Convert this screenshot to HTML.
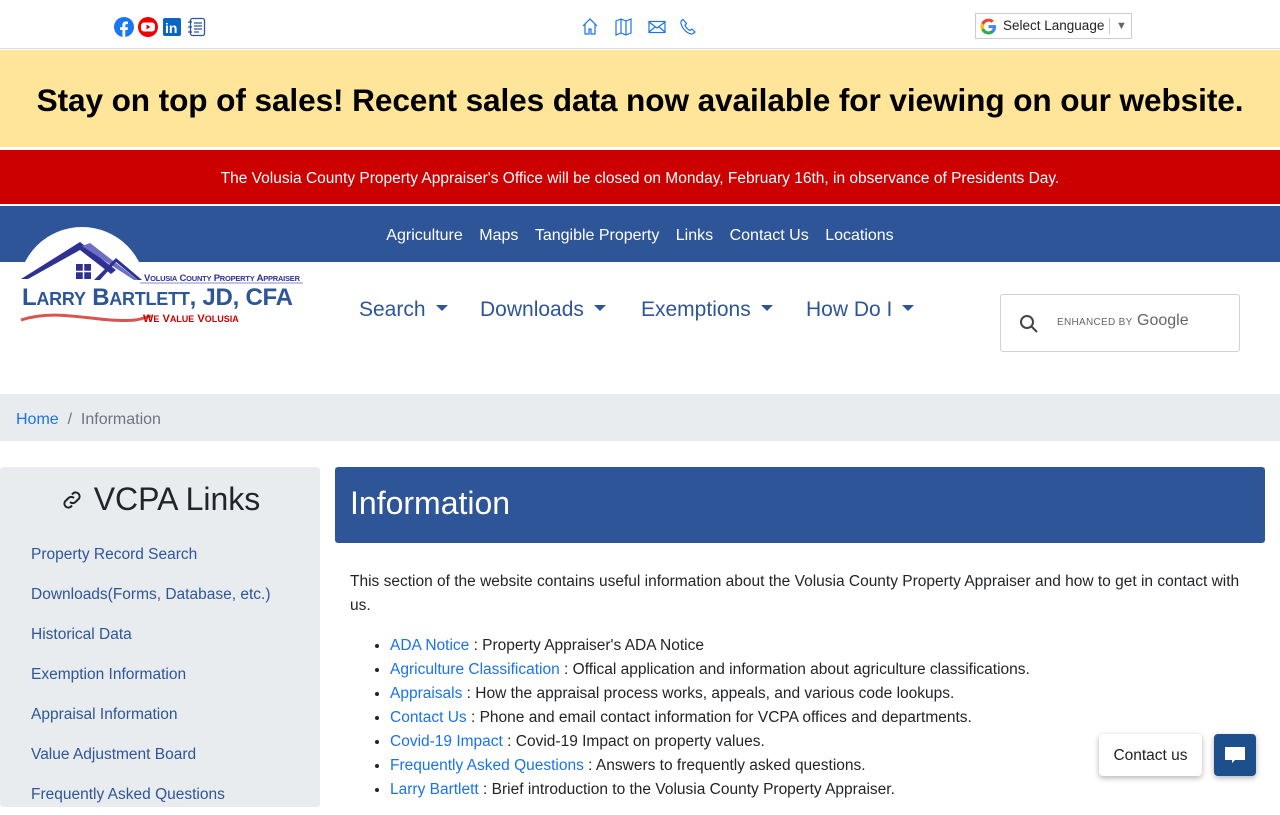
<!DOCTYPE html>
<html><head><meta charset="utf-8"><style>
*{box-sizing:border-box;margin:0;padding:0}
body{width:1280px;height:800px;overflow:hidden;position:relative;font-family:"Liberation Sans",sans-serif;background:#fff;color:#212529}
.abs{position:absolute}
a{text-decoration:none}
.top{left:0;top:0;width:1280px;height:49px;border-bottom:1px solid #ddd}
.yellow{left:0;top:50px;width:1280px;height:97px;background:#fee59a;text-align:center;font-weight:bold;font-size:31.6px;line-height:101px;color:#000;letter-spacing:-0.1px}
.red{left:0;top:150px;width:1280px;height:54px;background:#cc0000;color:#fff;text-align:center;font-size:15.5px;line-height:58px}
.blue{left:0;top:206px;width:1280px;height:56px;background:#2e5597}
.nav1{left:0;top:208px;width:1280px;text-align:center;line-height:56px;font-size:16px;color:#fff}
.nav1 span{margin:0 6px}
.nav2{top:298px;font-size:21px;color:#2e5597}
.car{display:inline-block;width:0;height:0;border-left:6px solid transparent;border-right:6px solid transparent;border-top:6px solid #2e5597;vertical-align:middle;margin-left:10px;margin-top:-4px}
.sbox{left:1000px;top:294px;width:240px;height:58px;border:1px solid #d0d0d0;border-radius:3px}
.crumb{left:0;top:394px;width:1280px;height:47px;background:#e9ecef;font-size:16px;line-height:51px;padding-left:16px;color:#6c757d}
.side{left:0;top:467px;width:320px;height:340px;background:#e9ecef;border-radius:3px}
.side h2{font-size:32px;font-weight:500;color:#212529;text-align:center;margin-top:14px;height:54px}
.side a{display:block;color:#2e5597;font-size:15.5px;padding-left:31px;height:40px;line-height:40px}
.mh{left:335px;top:467px;width:930px;height:76px;background:#2e5597;border-radius:3px;color:#fff;font-size:32px;line-height:72px;padding-left:15px;font-weight:500}
.content{left:350px;top:570px;width:890px;font-size:15.5px;line-height:24px}
.content ul{margin-top:16px;padding-left:40px}
.content a{color:#1a73e8}
</style></head><body>
<div class="abs top"></div>
<svg class="abs" style="left:114px;top:17px" width="94" height="20" viewBox="0 0 94 20">
<circle cx="10" cy="10" r="10" fill="#1877f2"/><path d="M11.3 20v-7h2.3l.4-2.8h-2.7V8.5c0-.8.3-1.4 1.4-1.4H14V4.6c-.3 0-1.1-.1-2.1-.1-2.1 0-3.5 1.3-3.5 3.6v2.1H6v2.8h2.4v7z" fill="#fff"/>
<circle cx="34" cy="10" r="10" fill="#e00"/><rect x="27" y="5.5" width="14" height="9" rx="3" fill="#fff"/><path d="M32.5 7.5v5l4-2.5z" fill="#e00"/>
<rect x="49" y="1" width="18" height="18" rx="2" fill="#0a66c2"/><text x="51" y="16" font-family="Liberation Sans" font-weight="bold" font-size="14" fill="#fff">in</text>
<rect x="76.5" y="1.5" width="14" height="17" rx="2" fill="none" stroke="#2e5597" stroke-width="1.3"/><path d="M80 6h8M80 9h8M80 12h8M80 15h5M74 5h4M74 10h4M74 15h4" stroke="#2e5597" stroke-width="1.2"/>
</svg>
<svg class="abs" style="left:582px;top:18px" width="118" height="18" viewBox="0 0 118 18" fill="none" stroke="#1a73e8" stroke-width="1.2">
<path d="M1 8L8 1l7 7M3 6v10h4v-5h2v5h4V6"/>
<path d="M34 3l5-2 5 2 5-2v14l-5 2-5-2-5 2zM39 1v14M44 3v14"/>
<rect x="67" y="3.5" width="16" height="11"/><path d="M67 4l8 6 8-6M67 14l6-5M83 14l-6-5"/>
<path d="M101 1.5c-1.5.8-2.5 2-2 4 1.5 5 5 9 10 10.5 2 .5 3-1 4-2l-3-3-2 1.5c-2-1-4-3-5-5l1.5-2z"/>
</svg>
<div class="abs" style="left:975px;top:13px;width:157px;height:26px;border:1px solid #ccc;font-size:13.5px;line-height:24px;padding-left:27px;color:#222">Select Language<span style="position:absolute;left:133px;top:4px;height:16px;border-left:1px solid #ccc"></span><span style="position:absolute;left:140px;top:0;color:#666;font-size:11px">▼</span>
<svg style="position:absolute;left:4px;top:4px" width="17" height="17" viewBox="0 0 18 18"><path d="M17 9.2c0-.6 0-1.1-.1-1.6H9v3.1h4.5a4 4 0 0 1-1.7 2.6v2.1h2.7c1.6-1.5 2.5-3.6 2.5-6.2z" fill="#4285f4"/><path d="M9 17.5c2.3 0 4.2-.8 5.5-2.1l-2.7-2.1c-.7.5-1.7.8-2.8.8-2.2 0-4-1.5-4.7-3.4H1.5v2.2A8.5 8.5 0 0 0 9 17.5z" fill="#34a853"/><path d="M4.3 10.7a5 5 0 0 1 0-3.3V5.2H1.5a8.5 8.5 0 0 0 0 7.6z" fill="#fbbc05"/><path d="M9 3.9c1.2 0 2.4.4 3.3 1.3l2.4-2.4A8.5 8.5 0 0 0 1.5 5.2l2.8 2.2C5 5.4 6.8 3.9 9 3.9z" fill="#ea4335"/></svg></div>

<div class="abs yellow">Stay on top of sales! Recent sales data now available for viewing on our website.</div>
<div class="abs red">The Volusia County Property Appraiser's Office will be closed on Monday, February 16th, in observance of Presidents Day.</div>
<div class="abs blue"></div>
<div class="abs nav1"><span>Agriculture</span> <span>Maps</span> <span>Tangible Property</span> <span>Links</span> <span>Contact Us</span> <span>Locations</span></div>

<div class="abs" style="left:18px;top:227px;width:128px;height:128px;border-radius:50%;background:#fff"></div>
<svg class="abs" style="left:18px;top:238px" width="290" height="90" viewBox="0 0 290 90">
<path d="M3 41L62 4l36 28-5 4-31-24L10 41z" fill="#2e3192"/>
<path d="M64 8l8-3 48 37h-4z" fill="#6b6fc7"/>
<path d="M76 42l22-22 26 22h-4L98 24 82 42z" fill="#2e3192"/>
<rect x="58" y="26" width="15" height="15" fill="#2e3192"/><path d="M65.5 26v15M58 33.5h15" stroke="#fff" stroke-width="1.5"/>
<path d="M122 45h163" stroke="#7f8fc8" stroke-width="1"/>
<text x="126" y="43" font-family="Liberation Sans" font-weight="bold" font-size="9.5" fill="#2e3192" textLength="156">V<tspan font-size="7.5">OLUSIA</tspan> C<tspan font-size="7.5">OUNTY</tspan> P<tspan font-size="7.5">ROPERTY</tspan> A<tspan font-size="7.5">PPRAISER</tspan></text>
<text x="4" y="67" font-family="Liberation Sans" font-weight="bold" font-size="24" fill="#2e5597" textLength="271">L<tspan font-size="18">ARRY</tspan> B<tspan font-size="18">ARTLETT</tspan>, JD, CFA</text>
<path d="M3 82c30-10 60-2 90 0s30-2 40-4" stroke="#d9534f" stroke-width="3" fill="none"/>
<text x="125" y="84" font-family="Liberation Sans" font-weight="bold" font-size="11" fill="#c00">W<tspan font-size="9">E</tspan> V<tspan font-size="9">ALUE</tspan> V<tspan font-size="9">OLUSIA</tspan></text>
</svg>

<div class="abs nav2" style="left:359px">Search<span class="car"></span></div>
<div class="abs nav2" style="left:480px">Downloads<span class="car"></span></div>
<div class="abs nav2" style="left:641px">Exemptions<span class="car"></span></div>
<div class="abs nav2" style="left:806px">How Do I<span class="car"></span></div>

<div class="abs sbox">
<svg style="position:absolute;left:18px;top:19px" width="20" height="20" viewBox="0 0 20 20" fill="none" stroke="#444" stroke-width="2"><circle cx="8" cy="8" r="6"/><path d="M12.5 12.5l5.5 5.5"/></svg>
<span style="position:absolute;left:56px;top:22px;font-size:10px;color:#666;letter-spacing:.3px">ENHANCED BY</span>
<span style="position:absolute;left:136px;top:17px;font-size:16px;color:#666">Google</span>
</div>

<div class="abs crumb"><span style="color:#1a73e8">Home</span>&nbsp;&nbsp;/&nbsp;&nbsp;Information</div>

<div class="abs side">
<h2><svg width="24" height="24" viewBox="0 0 24 24" fill="none" stroke="#212529" stroke-width="2" style="vertical-align:-2px;margin-right:10px"><path d="M10 14a4 4 0 0 0 5.5 0l3.5-3.5a4 4 0 0 0-5.5-5.5L12 6.5"/><path d="M14 10a4 4 0 0 0-5.5 0L5 13.5a4 4 0 0 0 5.5 5.5L12 17.5"/></svg>VCPA Links</h2>
<a>Property Record Search</a><a>Downloads(Forms, Database, etc.)</a><a>Historical Data</a><a>Exemption Information</a><a>Appraisal Information</a><a>Value Adjustment Board</a><a>Frequently Asked Questions</a>
</div>

<div class="abs mh">Information</div>
<div class="abs content">
<p>This section of the website contains useful information about the Volusia County Property Appraiser and how to get in contact with us.</p>
<ul>
<li><a>ADA Notice</a> : Property Appraiser's ADA Notice</li>
<li><a>Agriculture Classification</a> : Offical application and information about agriculture classifications.</li>
<li><a>Appraisals</a> : How the appraisal process works, appeals, and various code lookups.</li>
<li><a>Contact Us</a> : Phone and email contact information for VCPA offices and departments.</li>
<li><a>Covid-19 Impact</a> : Covid-19 Impact on property values.</li>
<li><a>Frequently Asked Questions</a> : Answers to frequently asked questions.</li>
<li><a>Larry Bartlett</a> : Brief introduction to the Volusia County Property Appraiser.</li>
</ul>
</div>

<div class="abs" style="left:1099px;top:734px;width:103px;height:42px;background:#fff;border-radius:4px;box-shadow:0 2px 6px rgba(0,0,0,.3);font-size:15.5px;line-height:44px;text-align:center;color:#222">Contact us</div>
<div class="abs" style="left:1214px;top:734px;width:42px;height:42px;background:#1c4f8c;border-radius:4px;box-shadow:0 2px 6px rgba(0,0,0,.3)">
<svg style="position:absolute;left:10px;top:12px" width="22" height="20" viewBox="0 0 22 20"><path d="M1 1h20v13H11l-3 3v-3H1z" fill="#fff"/></svg></div>
</body></html>
